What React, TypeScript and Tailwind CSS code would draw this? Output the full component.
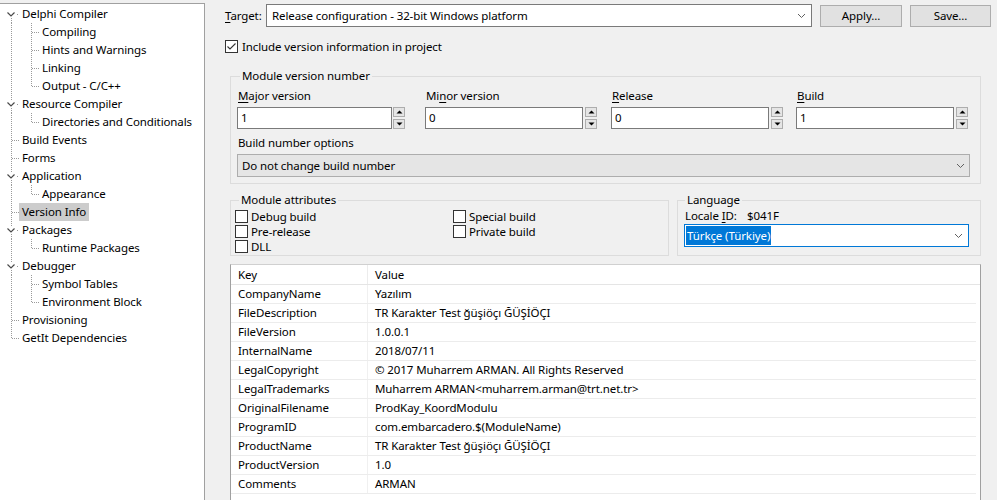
import React from "react";

type TreeItem = {
  label: string;
  level: 0 | 1;
  chevron?: boolean;
  last?: boolean;
  selected?: boolean;
};

const tree: TreeItem[] = [
  { label: "Delphi Compiler", level: 0, chevron: true },
  { label: "Compiling", level: 1 },
  { label: "Hints and Warnings", level: 1 },
  { label: "Linking", level: 1 },
  { label: "Output - C/C++", level: 1, last: true },
  { label: "Resource Compiler", level: 0, chevron: true },
  { label: "Directories and Conditionals", level: 1, last: true },
  { label: "Build Events", level: 0 },
  { label: "Forms", level: 0 },
  { label: "Application", level: 0, chevron: true },
  { label: "Appearance", level: 1, last: true },
  { label: "Version Info", level: 0, selected: true },
  { label: "Packages", level: 0, chevron: true },
  { label: "Runtime Packages", level: 1, last: true },
  { label: "Debugger", level: 0, chevron: true },
  { label: "Symbol Tables", level: 1 },
  { label: "Environment Block", level: 1, last: true },
  { label: "Provisioning", level: 0 },
  { label: "GetIt Dependencies", level: 0, last: true },
];

const versionInfo: [string, string][] = [
  ["CompanyName", "Yazılım"],
  ["FileDescription", "TR Karakter Test ğüşiöçı ĞÜŞİÖÇI"],
  ["FileVersion", "1.0.0.1"],
  ["InternalName", "2018/07/11"],
  ["LegalCopyright", "© 2017 Muharrem ARMAN. All Rights Reserved"],
  ["LegalTrademarks", "Muharrem ARMAN<muharrem.arman@trt.net.tr>"],
  ["OriginalFilename", "ProdKay_KoordModulu"],
  ["ProgramID", "com.embarcadero.$(ModuleName)"],
  ["ProductName", "TR Karakter Test ğüşiöçı ĞÜŞİÖÇI"],
  ["ProductVersion", "1.0"],
  ["Comments", "ARMAN"],
];

const dots = { stroke: "#9a9a9a", strokeWidth: 1, strokeDasharray: "1 1" };

function TreeLines({ item, first }: { item: TreeItem; first: boolean }) {
  if (item.level === 1) {
    return (
      <svg width="39" height="18" className="shrink-0">
        <line x1="11.5" y1="0" x2="11.5" y2="18" {...dots} />
        <line x1="31.5" y1="0" x2="31.5" y2={item.last ? 10 : 18} {...dots} />
        <line x1="32" y1="9.5" x2="39" y2="9.5" {...dots} />
      </svg>
    );
  }
  return (
    <svg width="19" height="18" className="shrink-0">
      {item.chevron ? (
        <>
          {!first && <line x1="11.5" y1="0" x2="11.5" y2="5" {...dots} />}
          <line x1="11.5" y1="13" x2="11.5" y2="18" {...dots} />
          <polyline
            points="7.5,7.5 11,11 14.5,7.5"
            fill="none"
            stroke="#4a4a4a"
            strokeWidth="1.2"
          />
          <line x1="17" y1="9.5" x2="19" y2="9.5" {...dots} />
        </>
      ) : (
        <>
          <line x1="11.5" y1="0" x2="11.5" y2={item.last ? 10 : 18} {...dots} />
          <line x1="12" y1="9.5" x2="19" y2="9.5" {...dots} />
        </>
      )}
    </svg>
  );
}

function Chevron({ color = "#606060" }: { color?: string }) {
  return (
    <svg width="9" height="6" className="shrink-0">
      <polyline points="1,1 4.5,4.5 8,1" fill="none" stroke={color} strokeWidth="1" />
    </svg>
  );
}

function Spin() {
  return (
    <div className="flex flex-col gap-[2px] w-[12px] h-[22px]">
      {[true, false].map((up) => (
        <div
          key={String(up)}
          className="h-[10px] border border-[#adadad] bg-[#e5e5e5] flex items-center justify-center"
        >
          <svg width="7" height="4">
            <polygon points={up ? "0.5,3.5 3.5,0.5 6.5,3.5" : "0.5,0.5 3.5,3.5 6.5,0.5"} fill="#000" />
          </svg>
        </div>
      ))}
    </div>
  );
}

function CheckBox({ checked = false }: { checked?: boolean }) {
  return (
    <svg width="13" height="13" className="shrink-0">
      <rect x="0.5" y="0.5" width="12" height="12" fill="#fff" stroke="#333" />
      {checked && (
        <polyline points="2.5,6.5 5,9 10.5,3.5" fill="none" stroke="#333" strokeWidth="1.1" />
      )}
    </svg>
  );
}

function NumberField({
  label,
  underline,
  value,
  width,
  gap,
  className,
}: {
  label: string;
  underline: number;
  value: string;
  width: string;
  gap: string;
  className?: string;
}) {
  return (
    <div className={`flex flex-col ${className || ""}`}>
      <div className="h-[16px] leading-[16px] pl-[1px]">
        {label.slice(0, underline)}
        <span className="underline underline-offset-2">{label[underline]}</span>
        {label.slice(underline + 1)}
      </div>
      <div className="flex mt-[3px]">
        <div className={`${width} h-[22px] bg-white border border-[#7a7a7a] flex items-center pl-[3px]`}>
          {value}
        </div>
        <div className={gap}>
          <Spin />
        </div>
      </div>
    </div>
  );
}

export default function App() {
  return (
    <div
      className="w-[997px] h-[500px] overflow-hidden flex bg-[#f0f0f0] text-black text-[11.5px] tracking-[-0.1px]"
      style={{ fontFamily: '"Noto Sans", "Liberation Sans", sans-serif' }}
    >
      {/* tree */}
      <div className="w-[205px] shrink-0 mt-[3px] bg-white border-t border-r border-[#a0a0a0] pt-[1px]">
        {tree.map((item, i) => (
          <div key={item.label} className="flex h-[18px] items-center">
            <TreeLines item={item} first={i === 0} />
            <span
              className={`px-[3px] h-[18px] leading-[18px] whitespace-nowrap ${
                item.selected ? "bg-[#cccccc]" : ""
              }`}
            >
              {item.label}
            </span>
          </div>
        ))}
      </div>

      {/* settings */}
      <div className="flex-1 flex flex-col pl-[20px] pt-[4px]">
        <div className="flex items-center h-[23px]">
          <div className="w-[41px]">
            <span className="underline underline-offset-2">T</span>arget:
          </div>
          <div className="w-[546px] h-[23px] bg-white border border-[#7a7a7a] flex items-center justify-between pl-[5px] pr-[5px]">
            <span>Release configuration - 32-bit Windows platform</span>
            <Chevron />
          </div>
          <button className="ml-[8px] w-[82px] h-[22px] bg-[#e1e1e1] border border-[#adadad] text-center">
            Apply...
          </button>
          <button className="ml-[8px] w-[81px] h-[22px] bg-[#e1e1e1] border border-[#adadad] text-center">
            Save...
          </button>
        </div>

        <div className="flex items-center h-[13px] mt-[13px]">
          <CheckBox checked />
          <span className="ml-[4px] leading-[13px]">Include version information in project</span>
        </div>

        <fieldset className="ml-[5px] mt-[15px] w-[751px] border border-[#dcdcdc] pl-[6px] pb-[6px]">
          <legend className="ml-[3px] px-[2px] h-[16px] leading-[16px]">Module version number</legend>
          <div className="flex mt-[4px]">
            <NumberField label="Major version" underline={0} value="1" width="w-[155px]" gap="ml-[1px]" />
            <NumberField label="Minor version" underline={2} value="0" width="w-[158px]" gap="ml-[2px]" className="ml-[20px]" />
            <NumberField label="Release" underline={0} value="0" width="w-[158px]" gap="ml-[2px]" className="ml-[14px]" />
            <NumberField label="Build" underline={0} value="1" width="w-[158px]" gap="ml-[2px]" className="ml-[13px]" />
          </div>
          <div className="mt-[6px] h-[16px] leading-[16px] pl-[1px]">Build number options</div>
          <div className="mt-[3px] w-[733px] h-[23px] bg-[#e5e5e5] border border-[#adadad] flex items-center justify-between pl-[4px] pr-[4px]">
            <span>Do not change build number</span>
            <Chevron />
          </div>
        </fieldset>

        <div className="flex ml-[5px] mt-[8px] gap-[8px]">
          <fieldset className="w-[439px] h-[64px] border border-[#dcdcdc] pl-[4px]">
            <legend className="ml-[4px] px-[2px] h-[16px] leading-[16px]">Module attributes</legend>
            <div className="grid grid-cols-[218px_1fr] mt-[1px]">
              {[
                ["Debug build", "Special build"],
                ["Pre-release", "Private build"],
                ["DLL", ""],
              ].map((row) =>
                row.map((label, j) =>
                  label ? (
                    <div key={label} className="flex items-center h-[15px]">
                      <CheckBox />
                      <span className="ml-[3px] leading-[13px]">{label}</span>
                    </div>
                  ) : (
                    <div key={`empty-${j}`} />
                  )
                )
              )}
            </div>
          </fieldset>

          <fieldset className="w-[304px] h-[64px] border border-[#dcdcdc] pl-[6px]">
            <legend className="ml-[1px] px-[2px] h-[16px] leading-[16px]">Language</legend>
            <div className="flex h-[14px] leading-[14px] pl-[1px] mt-[1px]">
              <span className="w-[62px] shrink-0">
                Locale <span className="underline underline-offset-2">I</span>D:
              </span>
              <span>$041F</span>
            </div>
            <div className="mt-[1px] w-[285px] h-[23px] bg-white border border-[#0078d7] flex items-center justify-between pl-[1px] pr-[5px]">
              <span className="bg-[#0078d7] text-white h-[19px] leading-[19px] px-[1px]">Türkçe (Türkiye)</span>
              <Chevron />
            </div>
          </fieldset>
        </div>

        <div className="ml-[5px] mt-[8px] w-[751px] h-[260px] shrink-0 bg-white border-t border-t-[#d0d0d0] border-x border-x-[#a0a0a0]">
          <div className="flex h-[20px] border-b border-[#e5e5e5]">
            <div className="w-[137px] border-r border-[#ececec] pl-[7px] leading-[19px]">Key</div>
            <div className="pl-[7px] leading-[19px]">Value</div>
          </div>
          {versionInfo.map(([k, v]) => (
            <div key={k} className="flex h-[19px] border-b border-[#ececec] mr-[4px]">
              <div className="w-[137px] border-r border-[#f0f0f0] pl-[7px] leading-[18px] whitespace-nowrap">{k}</div>
              <div className="pl-[7px] leading-[18px] whitespace-nowrap">{v}</div>
            </div>
          ))}
        </div>
      </div>
    </div>
  );
}
